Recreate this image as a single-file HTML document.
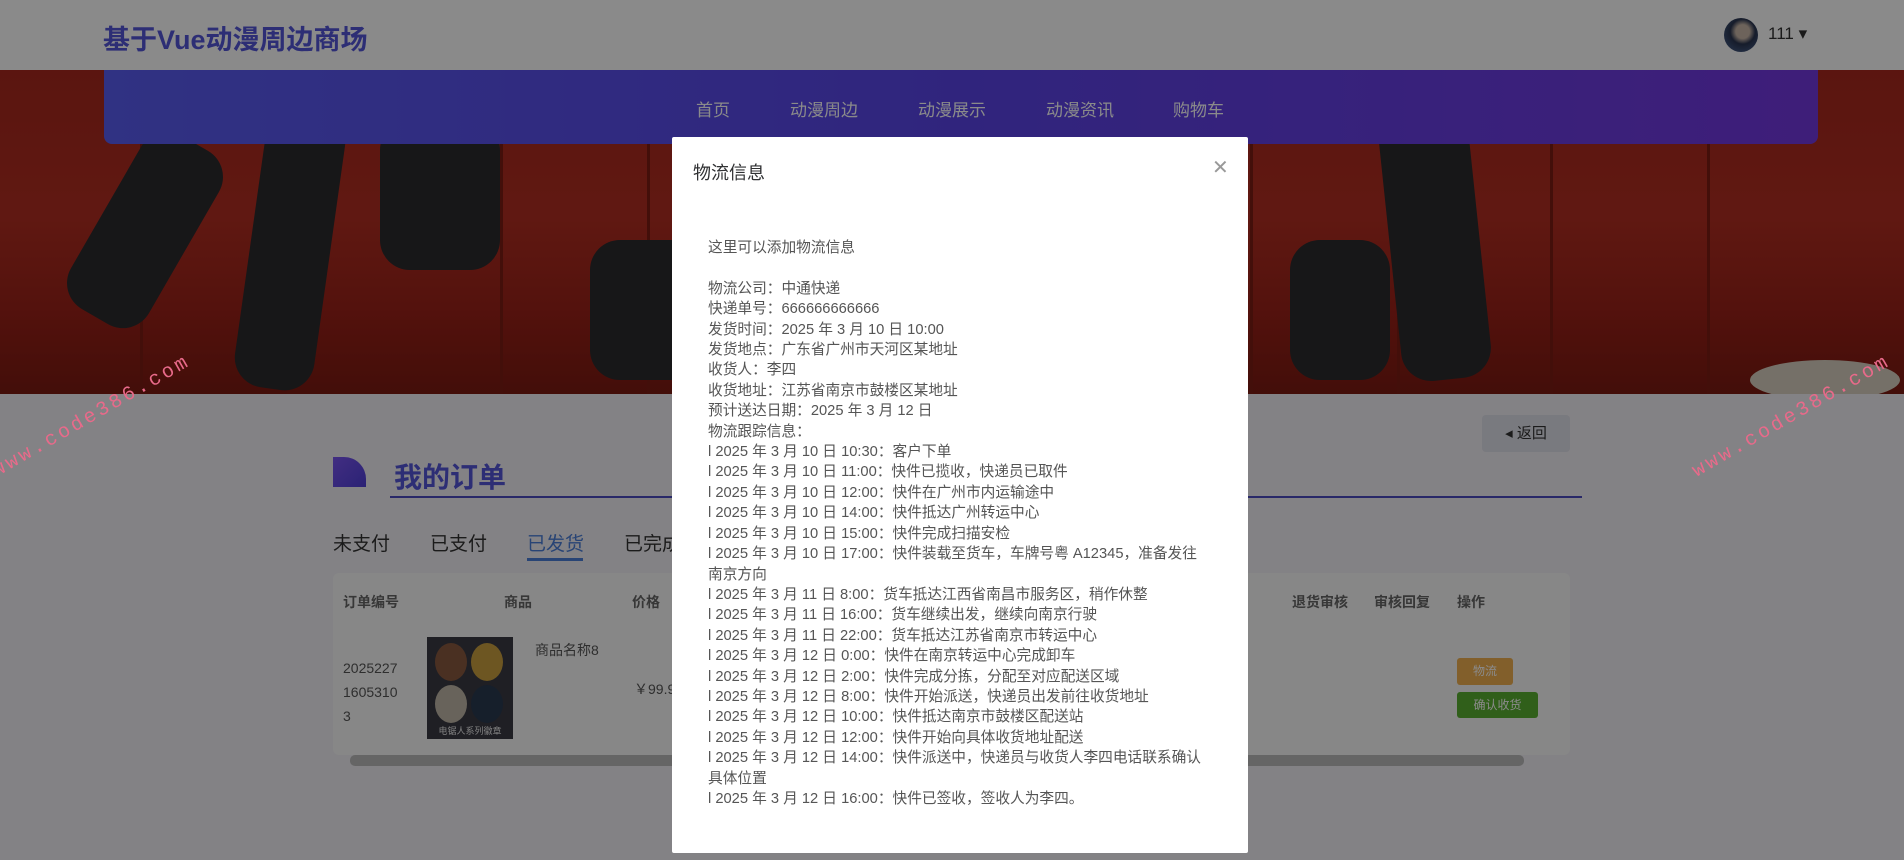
<!DOCTYPE html>
<html><head><meta charset="utf-8">
<style>
*{margin:0;padding:0;box-sizing:border-box}
body{width:1904px;height:860px;overflow:hidden;position:relative;background:#f2f0f5;font-family:"Liberation Sans","Noto Sans CJK SC",sans-serif}
.hdr{position:absolute;left:0;top:0;width:1904px;height:70px;background:#fff}
.logo{position:absolute;left:103px;top:18px;font-size:27px;font-weight:bold;color:#5456d8}
.av{position:absolute;left:1724px;top:18px;width:34px;height:34px;border-radius:50%;background:radial-gradient(circle at 55% 40%,#c9b7a8 0 25%,#2a3550 45%,#4f6a99 100%)}
.user{position:absolute;left:1768px;top:24px;font-size:17px;color:#333}
.banner{position:absolute;left:0;top:70px;width:1904px;height:324px;background:linear-gradient(180deg,#a8281e 0%,#b22e22 45%,#9a2118 75%,#7c1a12 100%);overflow:hidden}
.lk{position:absolute;top:0;height:324px;border-left:3px solid #7c1c14;border-right:3px solid #7c1c14}
.fig{position:absolute;background:#2c2b2d;border-radius:30px}
.nav{position:absolute;left:104px;top:70px;width:1714px;height:74px;background:linear-gradient(90deg,#5a5df2,#5a44e8 50%,#7438e0);border-radius:0 0 8px 8px}
.nav span{position:absolute;top:26px;font-size:17px;color:#fff}
.title{position:absolute;left:394px;top:456px;font-size:28px;font-weight:bold;color:#5456d8}
.ticon{position:absolute;left:333px;top:457px;width:33px;height:30px;background:linear-gradient(135deg,#7a55f0,#4f3fd8);border-radius:0 22px 0 0}
.tline{position:absolute;left:390px;top:496px;width:1192px;height:2px;background:#4a4bc0}
.tab{position:absolute;top:529px;font-size:19px;color:#333}
.box{position:absolute;left:333px;top:573px;width:1237px;height:182px;background:#fafafa;border-radius:6px}
.th{position:absolute;top:592px;font-size:14px;font-weight:bold;color:#666}
.td{position:absolute;font-size:14px;color:#555}
.back{position:absolute;left:1482px;top:415px;width:88px;height:37px;background:#dfe1ea;border-radius:4px;font-size:15px;color:#333;text-align:center;line-height:37px}
.ov{position:absolute;left:0;top:0;width:1904px;height:860px;background:rgba(0,0,0,0.46)}
.wm{position:absolute;color:#e86a8a;font-family:"Liberation Mono",monospace;font-size:20px;transform:rotate(-30deg);transform-origin:left bottom;letter-spacing:3px}
.modal{position:absolute;left:672px;top:137px;width:576px;height:716px;background:#fff;border-radius:2px}
.mt{position:absolute;left:21px;top:22px;font-size:18px;color:#303133}
.x{position:absolute;left:540px;top:18px;font-size:20px;color:#999}
.mc{position:absolute;left:36px;top:101px;font-size:14.7px;line-height:20.4px;color:#555;width:530px;white-space:nowrap}
</style></head><body>
<div class="hdr"><div class="logo">基于Vue动漫周边商场</div><div class="av"></div><div class="user">111 ▾</div></div>
<div class="banner">
<div class="lk" style="left:140px;width:150px"></div><div class="lk" style="left:500px;width:150px"></div>
<div class="lk" style="left:1250px;width:150px"></div><div class="lk" style="left:1550px;width:160px"></div>
<div class="fig" style="left:100px;top:60px;width:90px;height:200px;transform:rotate(30deg)"></div>
<div class="fig" style="left:250px;top:40px;width:80px;height:280px;transform:rotate(8deg)"></div>
<div class="fig" style="left:380px;top:50px;width:120px;height:150px"></div>
<div class="fig" style="left:590px;top:170px;width:120px;height:140px"></div>
<div class="fig" style="left:1290px;top:170px;width:100px;height:140px"></div>
<div class="fig" style="left:1390px;top:40px;width:90px;height:270px;transform:rotate(-6deg)"></div>
<div style="position:absolute;left:1750px;top:290px;width:150px;height:40px;background:#d8d0c0;border-radius:50%"></div>
</div>
<div class="nav"><span style="left:592px">首页</span><span style="left:686px">动漫周边</span><span style="left:814px">动漫展示</span><span style="left:942px">动漫资讯</span><span style="left:1069px">购物车</span></div>
<div class="back">◂ 返回</div>
<div class="ticon"></div><div class="title">我的订单</div><div class="tline"></div>
<div class="tab" style="left:333px">未支付</div><div class="tab" style="left:430px">已支付</div>
<div class="tab" style="left:527px;color:#4a7ed8">已发货</div><div style="position:absolute;left:527px;top:558px;width:56px;height:3px;background:#4a7ed8"></div>
<div class="tab" style="left:624px">已完成</div>
<div class="box"></div>
<div class="th" style="left:343px">订单编号</div><div class="th" style="left:504px">商品</div><div class="th" style="left:632px">价格</div>
<div class="th" style="left:1292px">退货审核</div><div class="th" style="left:1374px">审核回复</div><div class="th" style="left:1457px">操作</div>
<div class="td" style="left:343px;top:656px;line-height:24px">2025227<br>1605310<br>3</div>
<div style="position:absolute;left:427px;top:637px;width:86px;height:102px;background:#3a3a44"><div style="position:absolute;left:8px;top:6px;width:32px;height:38px;border-radius:50%;background:#8a5a40"></div><div style="position:absolute;left:44px;top:6px;width:32px;height:38px;border-radius:50%;background:#c9a040"></div><div style="position:absolute;left:8px;top:48px;width:32px;height:38px;border-radius:50%;background:#c0b8a8"></div><div style="position:absolute;left:44px;top:48px;width:32px;height:38px;border-radius:50%;background:#2a3a50"></div><div style="position:absolute;left:0;bottom:2px;width:86px;text-align:center;font-size:9px;color:#eee">电锯人系列徽章</div></div>
<div class="td" style="left:535px;top:640px">商品名称8</div><div class="td" style="left:634px;top:679px">￥99.9</div>
<div style="position:absolute;left:1457px;top:658px;width:56px;height:27px;background:#f0b050;border-radius:3px;color:#fff;font-size:12px;text-align:center;line-height:27px">物流</div>
<div style="position:absolute;left:1457px;top:692px;width:81px;height:26px;background:#5ab030;border-radius:3px;color:#fff;font-size:12px;text-align:center;line-height:26px">确认收货</div>
<div style="position:absolute;left:350px;top:755px;width:1174px;height:11px;background:#bbb;border-radius:5px"></div>
<div class="ov"></div>
<div class="wm" style="left:0;top:460px">www.code386.com</div>
<div class="wm" style="left:850px;top:460px">www.code386.com</div>
<div class="wm" style="left:1700px;top:460px">www.code386.com</div>
<div class="modal">
<div class="mt">物流信息</div><div class="x">✕</div>
<div class="mc">这里可以添加物流信息<br><br>物流公司：中通快递<br>快递单号：666666666666<br>发货时间：2025 年 3 月 10 日 10:00<br>发货地点：广东省广州市天河区某地址<br>收货人：李四<br>收货地址：江苏省南京市鼓楼区某地址<br>预计送达日期：2025 年 3 月 12 日<br>物流跟踪信息：<br>l 2025 年 3 月 10 日 10:30：客户下单<br>l 2025 年 3 月 10 日 11:00：快件已揽收，快递员已取件<br>l 2025 年 3 月 10 日 12:00：快件在广州市内运输途中<br>l 2025 年 3 月 10 日 14:00：快件抵达广州转运中心<br>l 2025 年 3 月 10 日 15:00：快件完成扫描安检<br>l 2025 年 3 月 10 日 17:00：快件装载至货车，车牌号粤 A12345，准备发往<br>南京方向<br>l 2025 年 3 月 11 日 8:00：货车抵达江西省南昌市服务区，稍作休整<br>l 2025 年 3 月 11 日 16:00：货车继续出发，继续向南京行驶<br>l 2025 年 3 月 11 日 22:00：货车抵达江苏省南京市转运中心<br>l 2025 年 3 月 12 日 0:00：快件在南京转运中心完成卸车<br>l 2025 年 3 月 12 日 2:00：快件完成分拣，分配至对应配送区域<br>l 2025 年 3 月 12 日 8:00：快件开始派送，快递员出发前往收货地址<br>l 2025 年 3 月 12 日 10:00：快件抵达南京市鼓楼区配送站<br>l 2025 年 3 月 12 日 12:00：快件开始向具体收货地址配送<br>l 2025 年 3 月 12 日 14:00：快件派送中，快递员与收货人李四电话联系确认<br>具体位置<br>l 2025 年 3 月 12 日 16:00：快件已签收，签收人为李四。</div>
</div>
</body></html>
